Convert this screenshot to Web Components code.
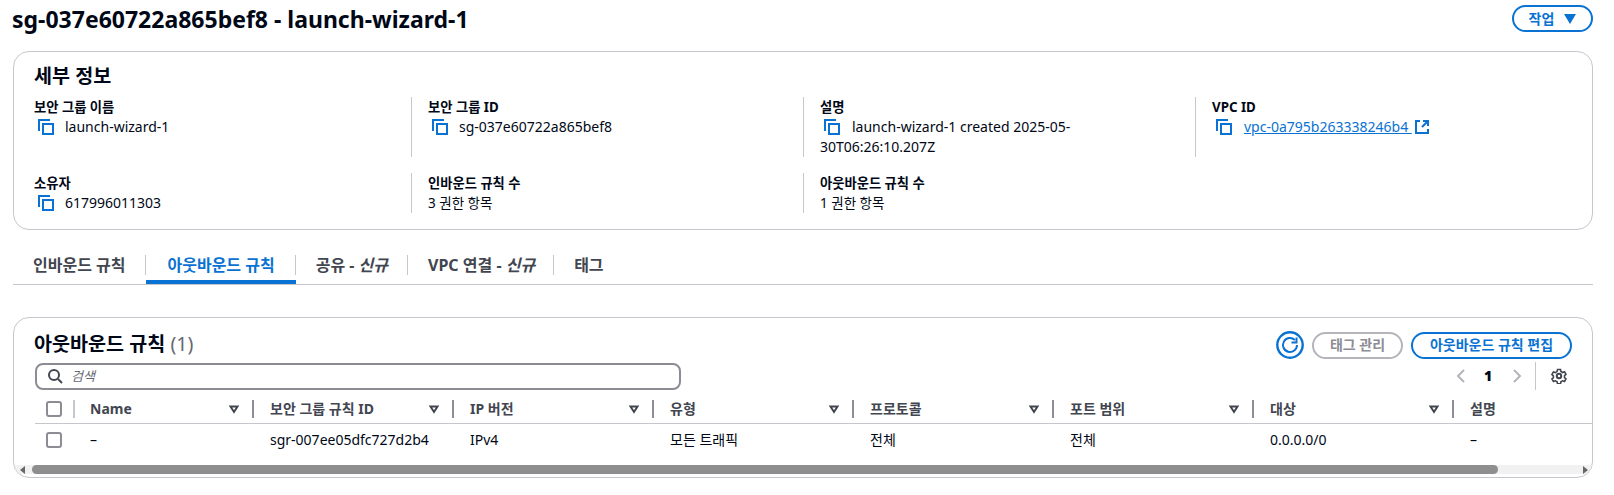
<!doctype html>
<html lang="ko">
<head>
<meta charset="utf-8">
<title>sg-037e60722a865bef8</title>
<style>
  html, body { margin: 0; background: #fff; }
  body {
    width: 1614px;
    height: 495px;
    overflow: hidden;
    font: 14px/20px "Noto Sans", "Noto Sans CJK KR", sans-serif;
    color: #000716;
  }
</style>
</head>
<body>
<sg-page></sg-page>
<script>
const FONT = `"Noto Sans", "Noto Sans CJK KR", sans-serif`;

class CopyIcon extends HTMLElement {
  constructor() {
    super();
    this.attachShadow({ mode: 'open' });
    this.shadowRoot.innerHTML = `
      <style>
        :host { display: inline-block; width: 16px; height: 16px; vertical-align: -3px; }
        svg { display: block; }
      </style>
      <svg width="16" height="16" viewBox="0 0 16 16" fill="none" stroke="#0972d3" stroke-width="2">
        <path d="M1 12V1h11"/>
        <rect x="5" y="5" width="10" height="10"/>
      </svg>`;
  }
}
customElements.define('copy-icon', CopyIcon);

class PillButton extends HTMLElement {
  constructor() {
    super();
    this.attachShadow({ mode: 'open' });
    this.shadowRoot.innerHTML = `
      <style>
        :host {
          display: inline-flex; align-items: center; justify-content: center; gap: 10px;
          box-sizing: border-box; height: 27px;
          border: 2px solid #0972d3; border-radius: 14px;
          color: #0972d3; font-weight: 700; font-size: 14px; line-height: 20px;
          background: #fff;
        }
        :host([disabled]) { border-color: #b4b4bb; color: #8c8c94; }
      </style>
      <slot></slot>`;
  }
}
customElements.define('pill-button', PillButton);

class KvItem extends HTMLElement {
  constructor() {
    super();
    this.attachShadow({ mode: 'open' });
    this.shadowRoot.innerHTML = `
      <style>
        :host { display: block; box-sizing: border-box; padding-left: 16px; border-left: 1px solid #c6c6cd; }
        :host([first]) { padding-left: 20px; border-left: 0; }
        .label { font-weight: 700; font-size: 13.3px; line-height: 20px; }
        .value { font-size: 14px; line-height: 20px; }
      </style>
      <div class="label"><slot name="label"></slot></div>
      <div class="value"><slot></slot></div>`;
  }
}
customElements.define('kv-item', KvItem);

class DetailsCard extends HTMLElement {
  constructor() {
    super();
    this.attachShadow({ mode: 'open' });
    this.shadowRoot.innerHTML = `
      <style>
        :host {
          display: block; box-sizing: border-box; height: 179px;
          margin: 0 21px 0 13px; padding: 10px 0 0 0;
          border: 1px solid #c6c6cd; border-radius: 16px;
        }
        h2 { margin: 0 0 0 20px; font-size: 19.6px; line-height: 28px; font-weight: 700; }
        .grid {
          display: grid; grid-template-columns: 397px 392px 392px 1fr;
          grid-template-rows: 60px 40px; row-gap: 16px; margin-top: 7px;
        }
        .pad { display: inline-block; width: 11px; }
        .pad.link { width: 12px; }
        .ind { display: inline-block; width: 4px; }
        .ko { font-size: 13.5px; }
        a { color: #0972d3; }
        svg { vertical-align: -2px; margin-left: 3px; }
      </style>
      <h2>세부 정보</h2>
      <div class="grid">
        <kv-item first><span slot="label">보안 그룹 이름</span><span class="ind"></span><copy-icon></copy-icon><span class="pad"></span>launch-wizard-1</kv-item>
        <kv-item><span slot="label">보안 그룹 ID</span><span class="ind"></span><copy-icon></copy-icon><span class="pad"></span>sg-037e60722a865bef8</kv-item>
        <kv-item><span slot="label">설명</span><span class="ind"></span><copy-icon></copy-icon><span class="pad link"></span>launch-wizard-1 created 2025-05-<br>30T06:26:10.207Z</kv-item>
        <kv-item><span slot="label">VPC ID</span><span class="ind"></span><copy-icon></copy-icon><span class="pad link"></span><a href="#">vpc-0a795b263338246b4 </a><svg width="14" height="14" viewBox="0 0 14 14" fill="none" stroke="#0972d3" stroke-width="2"><path d="M5 1H1v12h12V9"/><path d="M8 1h5v5M13 1L7 7"/></svg></kv-item>
        <kv-item first><span slot="label">소유자</span><span class="ind"></span><copy-icon></copy-icon><span class="pad"></span>617996011303</kv-item>
        <kv-item><span slot="label">인바운드 규칙 수</span><span class="ko">3 권한 항목</span></kv-item>
        <kv-item><span slot="label">아웃바운드 규칙 수</span><span class="ko">1 권한 항목</span></kv-item>
      </div>`;
  }
}
customElements.define('details-card', DetailsCard);

class TabBar extends HTMLElement {
  constructor() {
    super();
    this.attachShadow({ mode: 'open' });
    this.shadowRoot.innerHTML = `
      <style>
        :host {
          display: flex; box-sizing: border-box; height: 55px; padding: 25px 0 0 20px;
          margin: 0 21px 0 13px; border-bottom: 1px solid #c6c6cd;
          font-weight: 700; font-size: 16px; color: #424650;
        }
        .tab { box-sizing: border-box; height: 29px; padding: 0 20px; line-height: 20px; position: relative; }
        .tab::after { content: ""; position: absolute; right: 0; top: 0; height: 20px; width: 1px; background: #c6c6cd; }
        .tab:last-child::after { display: none; }
        .tab:first-of-type { padding: 0 21px 0 0; }
        .on { color: #0972d3; padding: 0 21px; border-bottom: 4px solid #0972d3; }
        .vpc { padding-right: 19px; }
        i { font-weight: 700; }
      </style>
      <div class="tab">인바운드 규칙</div>
      <div class="tab on">아웃바운드 규칙</div>
      <div class="tab">공유 - <i>신규</i></div>
      <div class="tab vpc">VPC 연결 - <i>신규</i></div>
      <div class="tab">태그</div>`;
  }
}
customElements.define('tab-bar', TabBar);

class SortHead extends HTMLElement {
  constructor() {
    super();
    this.attachShadow({ mode: 'open' });
    this.shadowRoot.innerHTML = `
      <style>
        :host {
          display: flex; flex: none; align-items: center; box-sizing: border-box; width: 200px; height: 24px;
          padding: 0 0 0 16px; font-weight: 700; font-size: 14px; color: #424650;
        }
        :host([nosort]) svg, :host([nosort]) .bar { display: none; }
        span { flex: 1; }
        svg { margin-right: 12px; }
        .bar { width: 2px; height: 18px; background: #8d8d94; }
      </style>
      <span><slot></slot></span>
      <svg width="12" height="12" viewBox="0 0 12 12" fill="none" stroke="#424650" stroke-width="2"><path d="M2.5 3.5h7L6 9z"/></svg>
      <div class="bar"></div>`;
  }
}
customElements.define('sort-head', SortHead);

class RulesTable extends HTMLElement {
  constructor() {
    super();
    this.attachShadow({ mode: 'open' });
    this.shadowRoot.innerHTML = `
      <style>
        :host {
          display: block; box-sizing: border-box; height: 161px; overflow: hidden;
          margin: 32px 21px 0 13px; border: 1px solid #c6c6cd; border-radius: 16px;
        }
        .top { display: flex; height: 44px; align-items: flex-start; padding: 0 20px; justify-content: space-between; }
        h2 { margin: 12px 0 0; font-size: 19.6px; line-height: 28px; font-weight: 700; }
        h2 span { font-weight: 400; color: #656871; }
        .actions { display: flex; align-items: center; gap: 8px; margin-top: 13px; }
        .refresh { width: 28px; height: 28px; }
        .tag { width: 91px; }
        .edit { width: 161px; }
        .second { display: flex; justify-content: space-between; align-items: center; height: 28px; padding-left: 21px; }
        .search {
          box-sizing: border-box; width: 646px; height: 27px; display: flex; align-items: center; gap: 8px;
          padding-left: 10px; border: 2px solid #8c8c94; border-radius: 8px;
          font-style: italic; font-size: 13px; color: #656871;
        }
        .pager { display: flex; align-items: center; height: 28px; margin-right: 25px; font-weight: 700; }
        .pager b { width: 16px; text-align: center; margin: 0 13px 0 11px; }
        .pager .vline { width: 1px; height: 28px; background: #c6c6cd; margin: 0 15px 0 10px; }
        .head, .row { display: flex; align-items: center; }
        .head { box-sizing: border-box; height: 34px; padding: 4px 0 0 11px; margin-left: 21px; border-bottom: 1px solid #c6c6cd; }
        .row { height: 32px; padding: 0 0 1px 32px; }
        .box { box-sizing: border-box; width: 16px; height: 16px; border: 2px solid #8c8c94; border-radius: 3px; background: #fff; flex: none; }
        .first { width: 29px; display: flex; align-items: center; flex: none; }
        .first i { width: 2px; height: 18px; background: #c6c6cd; margin-left: 11px; }
        .cell { width: 200px; box-sizing: border-box; padding-left: 16px; flex: none; }
        sort-head.namehead { width: 179px; padding-left: 15px; }
        .cell.name { width: 179px; padding-left: 15px; }
        .scroll { height: 9px; margin-top: 8px; background: #f1f1f1; display: flex; align-items: center; position: relative; padding: 0 6px 0 18px; }
        .thumb { width: 1466px; height: 9px; background: #8e8e8e; border-radius: 5px; }
        .arrow { position: absolute; top: 1px; width: 0; height: 0; border-top: 4px solid transparent; border-bottom: 4px solid transparent; }
        .al { left: 6px; border-right: 5px solid #666; }
        .ar { right: 4px; border-left: 5px solid #666; }
      </style>
      <div class="top">
        <h2>아웃바운드 규칙 <span>(1)</span></h2>
        <div class="actions">
          <svg class="refresh" viewBox="0 0 28 28" fill="none" stroke="#0972d3" stroke-width="2"><circle cx="14" cy="14" r="12.7" stroke-width="2.4"/><path d="M21 14a7 7 0 1 1-2.2-5.1"/><path d="M20.5 6.5v5h-5"/></svg>
          <pill-button class="tag" disabled>태그 관리</pill-button>
          <pill-button class="edit">아웃바운드 규칙 편집</pill-button>
        </div>
      </div>
      <div class="second">
        <div class="search">
          <svg width="16" height="16" viewBox="0 0 16 16" fill="none" stroke="#424650" stroke-width="2"><circle cx="7" cy="7" r="5"/><path d="M11 11l4 4"/></svg>
          검색
        </div>
        <div class="pager">
          <svg width="16" height="16" viewBox="0 0 16 16" fill="none" stroke="#b4b4bb" stroke-width="2"><path d="M11 2L5 8l6 6"/></svg>
          <b>1</b>
          <svg width="16" height="16" viewBox="0 0 16 16" fill="none" stroke="#b4b4bb" stroke-width="2"><path d="M5 2l6 6-6 6"/></svg>
          <div class="vline"></div>
          <svg width="16" height="16" viewBox="0 0 16 16" fill="none" stroke="#424650" stroke-width="2"><circle cx="8" cy="8" r="2.2"/><path d="M6.5 1.5h3l.4 2 1.7 1 1.9-.7 1.5 2.6-1.5 1.3v1.9l1.5 1.3-1.5 2.6-1.9-.7-1.7 1-.4 2h-3l-.4-2-1.7-1-1.9.7L.9 11l1.5-1.3V7.8L.9 6.5l1.5-2.6 1.9.7 1.7-1z" stroke-width="1.6"/></svg>
        </div>
      </div>
      <div class="head">
        <div class="first"><span class="box"></span><i></i></div>
        <sort-head class="namehead">Name</sort-head>
        <sort-head>보안 그룹 규칙 ID</sort-head>
        <sort-head>IP 버전</sort-head>
        <sort-head>유형</sort-head>
        <sort-head>프로토콜</sort-head>
        <sort-head>포트 범위</sort-head>
        <sort-head>대상</sort-head>
        <sort-head nosort>설명</sort-head>
      </div>
      <div class="row">
        <div class="first"><span class="box"></span></div>
        <div class="cell name">–</div>
        <div class="cell">sgr-007ee05dfc727d2b4</div>
        <div class="cell">IPv4</div>
        <div class="cell">모든 트래픽</div>
        <div class="cell">전체</div>
        <div class="cell">전체</div>
        <div class="cell">0.0.0.0/0</div>
        <div class="cell">–</div>
      </div>
      <div class="scroll"><span class="arrow al"></span><div class="thumb"></div><span class="arrow ar"></span></div>`;
  }
}
customElements.define('rules-table', RulesTable);

class SgPage extends HTMLElement {
  constructor() {
    super();
    this.attachShadow({ mode: 'open' });
    this.shadowRoot.innerHTML = `
      <style>
        :host { display: block; font-family: ${FONT}; }
        header {
          display: flex; justify-content: space-between; align-items: center;
          height: 37px; padding: 0 21px 0 12px; margin-bottom: 14px;
        }
        h1 { margin: 0; font-size: 23px; line-height: 36px; font-weight: 700; }
        pill-button { width: 81px; }
      </style>
      <header>
        <h1>sg-037e60722a865bef8 - launch-wizard-1</h1>
        <pill-button>작업 <svg width="12" height="10" viewBox="0 0 12 10"><path d="M0 0h12L6 10z" fill="#0972d3"/></svg></pill-button>
      </header>
      <details-card></details-card>
      <tab-bar></tab-bar>
      <rules-table></rules-table>`;
  }
}
customElements.define('sg-page', SgPage);
</script>
</body>
</html>
